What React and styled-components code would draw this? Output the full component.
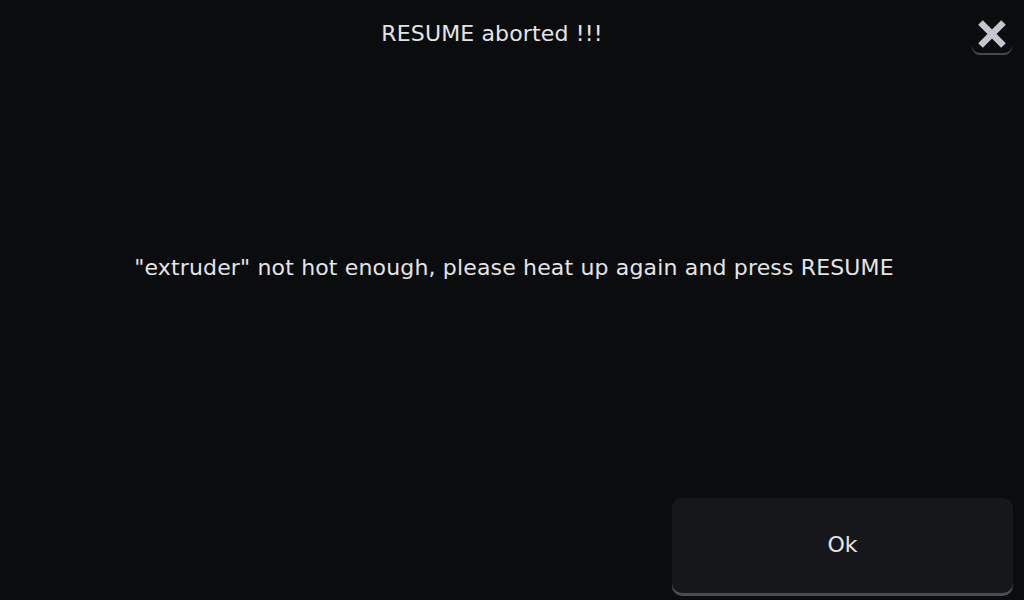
import React from "react";
import styled, { createGlobalStyle } from "styled-components";

const GlobalStyle = createGlobalStyle`
  html, body {
    margin: 0;
    padding: 0;
    background: #0b0c0e;
  }
  body {
    font-family: "DejaVu Sans", "Liberation Sans", sans-serif;
    color: #e4e4e6;
  }
`;

const Screen = styled.div`
  width: 1024px;
  height: 600px;
  display: flex;
  flex-direction: column;
  background: #0b0c0e;
  overflow: hidden;
`;

const Header = styled.div`
  display: flex;
  align-items: flex-start;
  height: 62px;
  padding: 14px 12px 0 12px;
  box-sizing: border-box;
`;

const Title = styled.div`
  flex: 1;
  text-align: center;
  font-size: 22px;
  line-height: 40px;
  letter-spacing: 0.15px;
`;

const CloseButton = styled.button`
  width: 40px;
  height: 39px;
  padding: 0;
  border: none;
  border-radius: 8px;
  background: #0b0c0e;
  box-shadow: 0 2px 0 #434852;
  display: flex;
  align-items: center;
  justify-content: center;
  cursor: pointer;
`;

const Body = styled.div`
  flex: 1;
  display: flex;
  align-items: center;
  justify-content: center;
  padding: 0 0 26px 4px;
  font-size: 22px;
  letter-spacing: 0.16px;
`;

const Footer = styled.div`
  display: flex;
  justify-content: flex-end;
  padding: 0 11px 7px 0;
`;

const ActionButton = styled.button`
  width: 341px;
  height: 95px;
  padding: 0 0 2px;
  border: none;
  border-radius: 10px;
  background: #16171b;
  box-shadow: 0 3px 0 #474c55;
  color: #e4e4e6;
  font-family: inherit;
  font-size: 22px;
  line-height: 26px;
  cursor: pointer;
`;

function CrossIcon() {
  return (
    <svg width="30" height="30" viewBox="0 0 30 30">
      <path
        d="M3.5 3.5 L26.5 26.5 M26.5 3.5 L3.5 26.5"
        stroke="#c3c7cf"
        strokeWidth="6.5"
        strokeLinecap="butt"
      />
    </svg>
  );
}

export default function App() {
  return (
    <>
      <GlobalStyle />
      <Screen>
        <Header>
          <Title>RESUME aborted !!!</Title>
          <CloseButton aria-label="close">
            <CrossIcon />
          </CloseButton>
        </Header>
        <Body>"extruder" not hot enough, please heat up again and press RESUME</Body>
        <Footer>
          <ActionButton>Ok</ActionButton>
        </Footer>
      </Screen>
    </>
  );
}
